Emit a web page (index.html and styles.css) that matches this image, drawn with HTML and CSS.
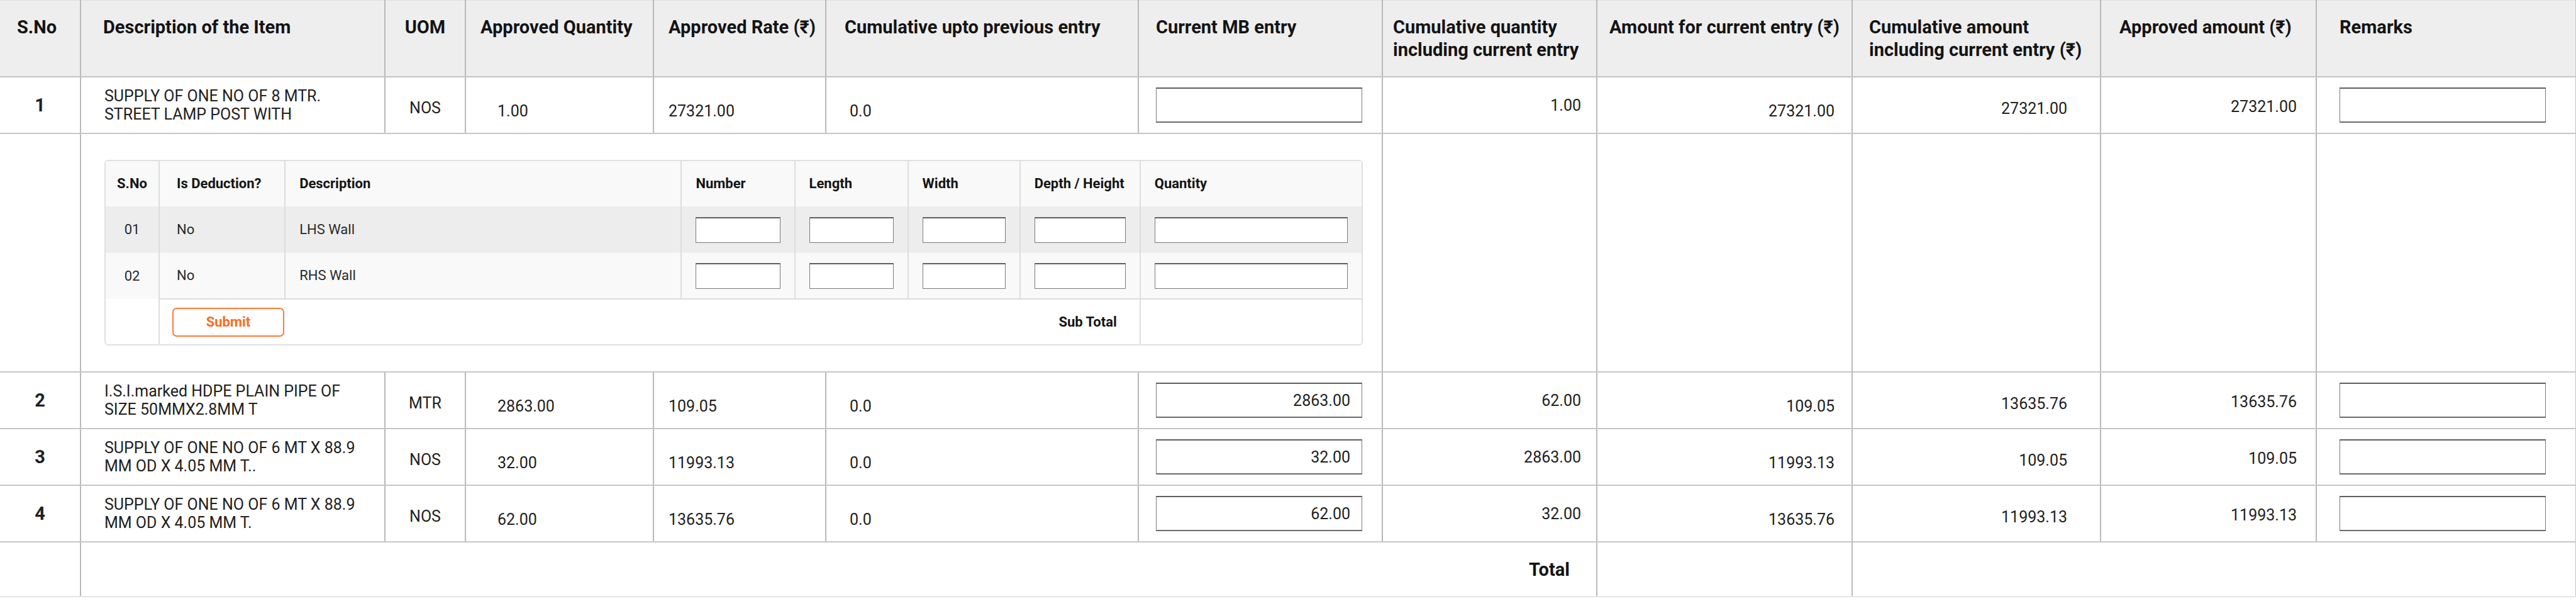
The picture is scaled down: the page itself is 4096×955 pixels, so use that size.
FILE: index.html
```html
<!DOCTYPE html>
<html lang="en">
<head>
<meta charset="utf-8">
<title>Measurement Book</title>
<link rel="stylesheet" href="styles.css">
</head>
<body>
<table class="sheet">
  <colgroup>
    <col class="w-sno"><col class="w-desc"><col class="w-uom"><col class="w-aq"><col class="w-ar"><col class="w-prev">
    <col class="w-mb"><col class="w-cq"><col class="w-amt"><col class="w-ca"><col class="w-apa"><col class="w-rem">
  </colgroup>
  <thead>
    <tr>
      <th class="c-sno">S.No</th>
      <th class="c-desc">Description of the Item</th>
      <th class="c-uom">UOM</th>
      <th class="c-aq">Approved Quantity</th>
      <th class="c-ar">Approved Rate (₹)</th>
      <th class="c-prev">Cumulative upto previous entry</th>
      <th class="c-mb">Current MB entry</th>
      <th class="c-cq">Cumulative quantity including current entry</th>
      <th class="c-amt">Amount for current entry (₹)</th>
      <th class="c-ca">Cumulative amount including current entry (₹)</th>
      <th class="c-apa">Approved amount (₹)</th>
      <th class="c-rem">Remarks</th>
    </tr>
  </thead>
  <tbody>
    <tr>
      <td class="c-sno">1</td>
      <td class="c-desc">SUPPLY OF ONE NO OF 8 MTR. STREET LAMP POST WITH</td>
      <td class="c-uom">NOS</td>
      <td class="c-aq">1.00</td>
      <td class="c-ar">27321.00</td>
      <td class="c-prev">0.0</td>
      <td class="c-mb"><input class="field" type="text" value=""></td>
      <td class="c-cq">1.00</td>
      <td class="c-amt">27321.00</td>
      <td class="c-ca">27321.00</td>
      <td class="c-apa">27321.00</td>
      <td class="c-rem"><input class="field" type="text" value=""></td>
    </tr>
    <tr class="measure-row">
      <td class="c-sno"></td>
      <td class="measure-cell" colspan="6">
        <div class="measure-card">
          <table class="measure">
            <colgroup>
              <col class="m-sno"><col class="m-ded"><col class="m-desc"><col class="m-num"><col class="m-len"><col class="m-wid"><col class="m-dep"><col class="m-qty">
            </colgroup>
            <thead>
              <tr>
                <th class="m-center">S.No</th>
                <th class="m-ded-cell">Is Deduction?</th>
                <th>Description</th>
                <th>Number</th>
                <th>Length</th>
                <th>Width</th>
                <th class="m-nowrap">Depth / Height</th>
                <th>Quantity</th>
              </tr>
            </thead>
            <tbody>
              <tr class="shade">
                <td class="m-center">01</td>
                <td class="m-ded-cell">No</td>
                <td>LHS Wall</td>
                <td><input class="mfield" type="text"></td>
                <td><input class="mfield" type="text"></td>
                <td><input class="mfield" type="text"></td>
                <td><input class="mfield" type="text"></td>
                <td><input class="mfield" type="text"></td>
              </tr>
              <tr class="light">
                <td class="m-center">02</td>
                <td class="m-ded-cell">No</td>
                <td>RHS Wall</td>
                <td><input class="mfield" type="text"></td>
                <td><input class="mfield" type="text"></td>
                <td><input class="mfield" type="text"></td>
                <td><input class="mfield" type="text"></td>
                <td><input class="mfield" type="text"></td>
              </tr>
              <tr class="foot">
                <td class="foot-blank"></td>
                <td class="foot-actions" colspan="6">
                  <div class="sub-row">
                    <button class="btn-submit" type="button">Submit</button>
                    <span class="sub-label">Sub Total</span>
                  </div>
                </td>
                <td class="foot-qty"></td>
              </tr>
            </tbody>
          </table>
        </div>
      </td>
      <td class="c-cq"></td>
      <td class="c-amt"></td>
      <td class="c-ca"></td>
      <td class="c-apa"></td>
      <td class="c-rem"></td>
    </tr>
    <tr>
      <td class="c-sno">2</td>
      <td class="c-desc">I.S.I.marked HDPE PLAIN PIPE OF SIZE 50MMX2.8MM T</td>
      <td class="c-uom">MTR</td>
      <td class="c-aq">2863.00</td>
      <td class="c-ar">109.05</td>
      <td class="c-prev">0.0</td>
      <td class="c-mb"><input class="field" type="text" value="2863.00"></td>
      <td class="c-cq">62.00</td>
      <td class="c-amt">109.05</td>
      <td class="c-ca">13635.76</td>
      <td class="c-apa">13635.76</td>
      <td class="c-rem"><input class="field" type="text" value=""></td>
    </tr>
    <tr>
      <td class="c-sno">3</td>
      <td class="c-desc">SUPPLY OF ONE NO OF 6 MT X 88.9 MM OD X 4.05 MM T..</td>
      <td class="c-uom">NOS</td>
      <td class="c-aq">32.00</td>
      <td class="c-ar">11993.13</td>
      <td class="c-prev">0.0</td>
      <td class="c-mb"><input class="field" type="text" value="32.00"></td>
      <td class="c-cq">2863.00</td>
      <td class="c-amt">11993.13</td>
      <td class="c-ca">109.05</td>
      <td class="c-apa">109.05</td>
      <td class="c-rem"><input class="field" type="text" value=""></td>
    </tr>
    <tr>
      <td class="c-sno">4</td>
      <td class="c-desc">SUPPLY OF ONE NO OF 6 MT X 88.9 MM OD X 4.05 MM T.</td>
      <td class="c-uom">NOS</td>
      <td class="c-aq">62.00</td>
      <td class="c-ar">13635.76</td>
      <td class="c-prev">0.0</td>
      <td class="c-mb"><input class="field" type="text" value="62.00"></td>
      <td class="c-cq">32.00</td>
      <td class="c-amt">13635.76</td>
      <td class="c-ca">11993.13</td>
      <td class="c-apa">11993.13</td>
      <td class="c-rem"><input class="field" type="text" value=""></td>
    </tr>
    <tr class="total-row">
      <td class="c-sno"></td>
      <td class="total-label" colspan="7">Total</td>
      <td class="c-amt"></td>
      <td class="c-rem" colspan="3"></td>
    </tr>
  </tbody>
</table>
</body>
</html>
```

FILE: styles.css
```css
* { box-sizing: border-box; }

html, body {
  margin: 0;
  padding: 0;
  background: #ffffff;
}

body {
  font-family: Roboto, "Noto Sans", "DejaVu Sans", sans-serif;
  color: #1f1f1f;
}

/* ---------- main sheet ---------- */
.sheet {
  width: 4096px;
  table-layout: fixed;
  border-collapse: collapse;
}

.w-sno { width: 128px; }
.w-desc { width: 484px; }
.w-uom { width: 128px; }
.w-aq { width: 299px; }
.w-ar { width: 274px; }
.w-prev { width: 497px; }
.w-mb { width: 388px; }
.w-cq { width: 341px; }
.w-amt { width: 406px; }
.w-ca { width: 395px; }
.w-apa { width: 343px; }
.w-rem { width: 413px; }

.sheet > thead > tr > th {
  background: #eeeeee;
  color: #141414;
  font-size: 29px;
  font-weight: 700;
  line-height: 36px;
  text-align: left;
  vertical-align: top;
  padding: 24px 8px 24px 16px;
  border-top: 1px solid #dddddd;
  border-left: 2px solid #b9b9b9;
  border-bottom: 2px solid #c4c4c4;
}

.sheet > tbody > tr > td {
  font-size: 25px;
  line-height: 29px;
  color: #212121;
  vertical-align: middle;
  padding: 15px 16px 15px 16px;
  border-left: 2px solid #b9b9b9;
  border-bottom: 2px solid #c6c6c6;
}

.sheet > thead > tr > th:first-child,
.sheet > tbody > tr > td:first-child {
  border-left: none;
}

.sheet > thead > tr > th:last-child,
.sheet > tbody > tr > td:last-child {
  border-right: 2px solid #c4c4c4;
}

/* header column offsets */
.sheet > thead > tr > th.c-sno { padding-left: 27px; }
.sheet > thead > tr > th.c-desc { padding-left: 35px; }
.sheet > thead > tr > th.c-uom { text-align: center; padding-left: 6px; padding-right: 6px; }
.sheet > thead > tr > th.c-aq { padding-left: 23px; padding-right: 4px; }
.sheet > thead > tr > th.c-ar { padding-left: 23px; padding-right: 2px; }
.sheet > thead > tr > th.c-prev { padding-left: 29px; }
.sheet > thead > tr > th.c-mb { padding-left: 27px; }
.sheet > thead > tr > th.c-cq { padding-left: 16px; padding-right: 14px; }
.sheet > thead > tr > th.c-amt { text-align: center; padding-left: 4px; padding-right: 4px; }
.sheet > thead > tr > th.c-ca { padding-left: 26px; padding-right: 4px; }
.sheet > thead > tr > th.c-apa { padding-left: 29px; padding-right: 4px; }
.sheet > thead > tr > th.c-rem { padding-left: 36px; }

/* body column offsets */
.sheet > tbody > tr > td.c-sno {
  text-align: center;
  font-weight: 700;
  font-size: 29px;
  padding-left: 4px;
  padding-right: 4px;
}
.sheet > tbody > tr > td.c-desc { padding-left: 37px; padding-right: 24px; }
.sheet > tbody > tr > td.c-uom { text-align: center; padding-top: 24px; padding-left: 8px; padding-right: 8px; }
.sheet > tbody > tr > td.c-aq { padding-left: 50px; padding-top: 33px; }
.sheet > tbody > tr > td.c-ar { padding-left: 23px; padding-top: 33px; }
.sheet > tbody > tr > td.c-prev { padding-left: 37px; padding-top: 33px; }
.sheet > tbody > tr > td.c-mb { padding-left: 27px; padding-right: 31px; }
.sheet > tbody > tr > td.c-cq { text-align: right; padding-right: 24px; }
.sheet > tbody > tr > td.c-amt { text-align: right; padding-right: 27px; padding-top: 33px; }
.sheet > tbody > tr > td.c-ca { text-align: right; padding-right: 52px; padding-top: 26px; }
.sheet > tbody > tr > td.c-apa { text-align: right; padding-right: 30px; padding-top: 20px; }
.sheet > tbody > tr > td.c-rem { padding-left: 36px; padding-right: 47px; }

.field {
  display: block;
  width: 100%;
  height: 56px;
  margin: 0;
  padding: 0 18px;
  border: 1px solid #7a7a7a;
  border-top: 2px solid #5e5e5e;
  border-bottom: 2px solid #6a6a6a;
  border-radius: 0;
  background: #ffffff;
  font-family: Roboto, "Noto Sans", sans-serif;
  font-size: 25px;
  color: #1f1f1f;
  text-align: right;
}

/* ---------- measurement row ---------- */
.sheet > tbody > tr.measure-row > td.measure-cell {
  padding: 41px 30px 41px 37px;
}

.measure-card {
  border: 2px solid #e0e0e0;
  border-radius: 6px;
  overflow: hidden;
  background: #ffffff;
}

.measure {
  width: 100%;
  table-layout: fixed;
  border-collapse: collapse;
}

.m-sno { width: 85px; }
.m-ded { width: 200px; }
.m-desc { width: 630px; }
.m-num { width: 180px; }
.m-len { width: 180px; }
.m-wid { width: 178px; }
.m-dep { width: 191px; }
.m-qty { width: 352px; }

.measure th,
.measure td {
  height: 73px;
  font-size: 22px;
  line-height: 26px;
  padding: 0 22px;
  text-align: left;
  vertical-align: middle;
  border-left: 2px solid #dddddd;
}

.measure thead th { height: 72px; }
.measure tr.shade td { height: 74px; }
.measure tr.light td { height: 73px; }
.measure tr.foot td { height: 72px; }

.measure th {
  background: #f9f9f9;
  font-weight: 700;
  color: #141414;
}

.measure th.m-nowrap {
  white-space: nowrap;
  padding-right: 4px;
}

.measure td {
  color: #2a2a2a;
}

.measure th:first-child,
.measure td:first-child {
  border-left: none;
}

.measure .m-center {
  text-align: center;
  padding: 0;
}

.measure .m-ded-cell {
  padding-left: 27px;
}

.measure tr.shade td { background: #ededed; }
.measure tr.light td { background: #f9f9f9; }

.mfield {
  display: block;
  width: 100%;
  height: 41px;
  margin: 0;
  padding: 0 8px;
  border: 1px solid #7a7a7a;
  border-top: 2px solid #5e5e5e;
  border-radius: 0;
  background: #ffffff;
  font-family: Roboto, "Noto Sans", sans-serif;
  font-size: 20px;
}

.measure tr.foot td {
  background: #ffffff;
}

.measure tr.foot td.foot-actions,
.measure tr.foot td.foot-qty {
  border-top: 2px solid #dddddd;
}

.measure tr.foot td.foot-actions {
  padding: 0 36px 0 20px;
}

.sub-row {
  display: flex;
  align-items: center;
  justify-content: space-between;
}

.btn-submit {
  width: 178px;
  height: 46px;
  margin: 0;
  padding: 0;
  border: 2px solid #ff7a33;
  border-radius: 7px;
  background: #ffffff;
  color: #ff6b1c;
  font-family: Roboto, "Noto Sans", sans-serif;
  font-size: 22px;
  font-weight: 700;
}

.sub-label {
  font-weight: 700;
  color: #141414;
}

/* ---------- total row ---------- */
.sheet > tbody > tr.total-row > td {
  height: 87px;
  border-bottom: 2px solid #e4e4e4;
}

.sheet > tbody > tr.total-row > td.total-label {
  text-align: right;
  font-size: 29px;
  font-weight: 700;
  line-height: 36px;
  color: #141414;
  padding-right: 42px;
}
```
